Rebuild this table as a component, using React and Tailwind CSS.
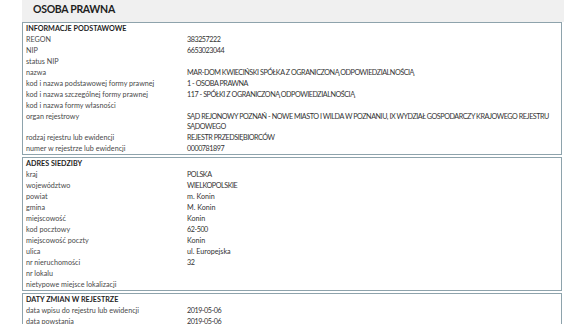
import React from 'react';

const sections = [
  {
    title: 'INFORMACJE PODSTAWOWE',
    rows: [
      ['REGON', '383257222'],
      ['NIP', '6653023044'],
      ['status NIP', ''],
      ['nazwa', 'MAR-DOM KWIECIŃSKI SPÓŁKA Z OGRANICZONĄ ODPOWIEDZIALNOŚCIĄ'],
      ['kod i nazwa podstawowej formy prawnej', '1 - OSOBA PRAWNA'],
      ['kod i nazwa szczególnej formy prawnej', '117 - SPÓŁKI Z OGRANICZONĄ ODPOWIEDZIALNOŚCIĄ'],
      ['kod i nazwa formy własności', ''],
      [
        'organ rejestrowy',
        'SĄD REJONOWY POZNAŃ - NOWE MIASTO I WILDA W POZNANIU, IX WYDZIAŁ GOSPODARCZY KRAJOWEGO REJESTRU SĄDOWEGO',
      ],
      ['rodzaj rejestru lub ewidencji', 'REJESTR PRZEDSIĘBIORCÓW'],
      ['numer w rejestrze lub ewidencji', '0000781897'],
    ],
  },
  {
    title: 'ADRES SIEDZIBY',
    rows: [
      ['kraj', 'POLSKA'],
      ['województwo', 'WIELKOPOLSKIE'],
      ['powiat', 'm. Konin'],
      ['gmina', 'M. Konin'],
      ['miejscowość', 'Konin'],
      ['kod pocztowy', '62-500'],
      ['miejscowość poczty', 'Konin'],
      ['ulica', 'ul. Europejska'],
      ['nr nieruchomości', '32'],
      ['nr lokalu', ''],
      ['nietypowe miejsce lokalizacji', ''],
    ],
  },
  {
    title: 'DATY ZMIAN W REJESTRZE',
    rows: [
      ['data wpisu do rejestru lub ewidencji', '2019-05-06'],
      ['data powstania', '2019-05-06'],
      ['data rozpoczęcia działalności', '2019-05-06'],
    ],
  },
];

// jedna sekcja z ramką
const Section = ({ title, rows }) => (
  <div className="border border-[#8ea3ac] pl-[3px]">
    <div className="font-bold text-[#1e1e1e] leading-[10px] py-[0.5px]">{title}</div>
    {rows.map(([label, value]) => (
      <div key={label} className="flex leading-[10px] py-[0.5px]">
        <span className="w-[161px] shrink-0 text-[#4a4a4a]">{label}</span>
        <span
          className={`flex-1 text-[#333] pr-[8px] ${
            value === value.toUpperCase() ? 'tracking-[-0.45px]' : ''
          }`}
        >
          {value}
        </span>
      </div>
    ))}
  </div>
);

export default function App() {
  return (
    <div className="bg-white w-[580px] h-[324px] overflow-hidden font-['Lato',sans-serif]">
      <div className="ml-[22px] w-[542px]">
        <div className="bg-[#f0f0f0] h-[22px] pl-[11px] pb-[3px] flex items-center">
          <h1 className="text-[10.5px] font-bold text-[#1e1e1e] leading-none tracking-[-0.3px]">
            OSOBA PRAWNA
          </h1>
        </div>
        <div className="w-[540px] text-[7.2px] flex flex-col gap-[2px]">
          {sections.map((s) => (
            <Section key={s.title} {...s} />
          ))}
        </div>
      </div>
    </div>
  );
}
